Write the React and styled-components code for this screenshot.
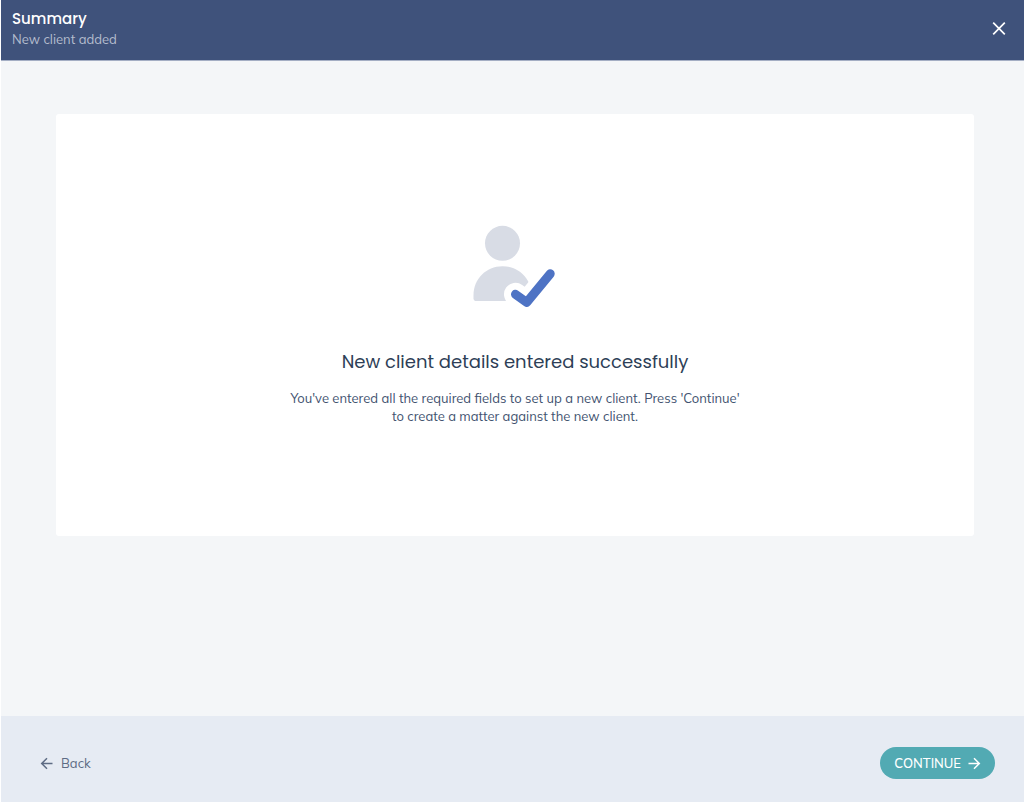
import React from 'react';
import styled, { createGlobalStyle } from 'styled-components';

const GlobalStyle = createGlobalStyle`
  * {
    box-sizing: border-box;
  }

  body {
    margin: 0;
    background: #ffffff;
    font-family: Muli, Mulish, Nunito, "Open Sans", sans-serif;
  }
`;

const Page = styled.div`
  display: flex;
  flex-direction: column;
  min-height: 100vh;
  padding-left: 1px;
`;

const Header = styled.header`
  display: flex;
  align-items: center;
  justify-content: space-between;
  padding: 9px 16px 11px 11px;
  background: #3f527b;
  border-bottom: 1px solid #a4aec4;
`;

const Title = styled.h1`
  margin: 0;
  color: #ffffff;
  font-family: Poppins, Inter, sans-serif;
  font-size: 15px;
  font-weight: 500;
  line-height: 20px;
`;

const Subtitle = styled.p`
  margin: 0;
  color: #b4bccd;
  font-size: 13px;
  line-height: 20px;
`;

const CloseButton = styled.button`
  display: flex;
  padding: 0;
  border: 0;
  background: none;
  color: #ffffff;
  cursor: pointer;
`;

const Main = styled.main`
  flex: 1;
  padding: 53px 50px 53px 55px;
  background: #f4f6f8;
`;

const Card = styled.section`
  display: flex;
  flex-direction: column;
  align-items: center;
  padding: 111px 24px;
  border-radius: 3px;
  background: #ffffff;
  text-align: center;
`;

const Heading = styled.h2`
  margin: 41px 0 13px;
  color: #2e3f57;
  font-family: Poppins, Inter, sans-serif;
  font-size: 18px;
  font-weight: 400;
  line-height: 28px;
`;

const Message = styled.p`
  max-width: 460px;
  margin: 0;
  color: #425370;
  font-size: 13px;
  line-height: 18px;
`;

const Footer = styled.footer`
  display: flex;
  align-items: center;
  justify-content: space-between;
  padding: 31px 29px 23px 39px;
  background: #e6ebf3;
`;

const Button = styled.button`
  display: flex;
  align-items: center;
  border: 0;
  font-family: inherit;
  font-size: 13px;
  line-height: 18px;
  cursor: pointer;
`;

const BackButton = styled(Button)`
  gap: 7px;
  padding: 0;
  background: none;
  color: #5e6c84;
`;

const ContinueButton = styled(Button)`
  gap: 6px;
  padding: 7px 14px;
  border-radius: 16px;
  background: #52aab3;
  color: #ffffff;
  font-weight: 500;
`;

function CloseIcon() {
  return (
    <svg width="18" height="18" viewBox="0 0 18 18" fill="none" stroke="currentColor" strokeWidth="1.7" aria-hidden="true">
      <path d="M3.2 2.7 14.8 14.3M14.8 2.7 3.2 14.3" />
    </svg>
  );
}

function ArrowIcon({ back }) {
  return (
    <svg width="14" height="14" viewBox="0 0 14 14" fill="none" stroke="currentColor" strokeWidth="1.5" aria-hidden="true">
      <path d={back ? 'M12.5 7.5H2M7 2.2 1.7 7.5 7 12.8' : 'M1.5 7.5H12M7 2.2 12.3 7.5 7 12.8'} />
    </svg>
  );
}

function ClientAddedIcon() {
  return (
    <svg width="84" height="82" viewBox="0 0 84 82" fill="none" aria-hidden="true">
      <circle cx="29.5" cy="18.3" r="17.5" fill="#d8dce5" />
      <path d="M.5 73.2V70C.5 54 13 41.2 29.5 41.2S58.5 54 58.5 70V76H3.3Q.5 76 .5 73.2Z" fill="#d8dce5" />
      <g strokeLinecap="round" strokeLinejoin="round">
        <path d="M42.5 69.3 53.7 77.3 77.2 48.8" stroke="#ffffff" strokeWidth="23" />
        <path d="M42.5 69.3 53.7 77.3 77.2 48.8" stroke="#4e73c4" strokeWidth="9" />
      </g>
    </svg>
  );
}

function App() {
  return (
    <>
      <GlobalStyle />
      <Page>
        <Header>
          <div>
            <Title>Summary</Title>
            <Subtitle>New client added</Subtitle>
          </div>
          <CloseButton type="button" aria-label="Close">
            <CloseIcon />
          </CloseButton>
        </Header>

        <Main>
          <Card>
            <ClientAddedIcon />
            <Heading>New client details entered successfully</Heading>
            <Message>
              You've entered all the required fields to set up a new client. Press 'Continue' to create a matter against the new client.
            </Message>
          </Card>
        </Main>

        <Footer>
          <BackButton type="button">
            <ArrowIcon back />
            Back
          </BackButton>
          <ContinueButton type="button">
            CONTINUE
            <ArrowIcon />
          </ContinueButton>
        </Footer>
      </Page>
    </>
  );
}

export default App;
